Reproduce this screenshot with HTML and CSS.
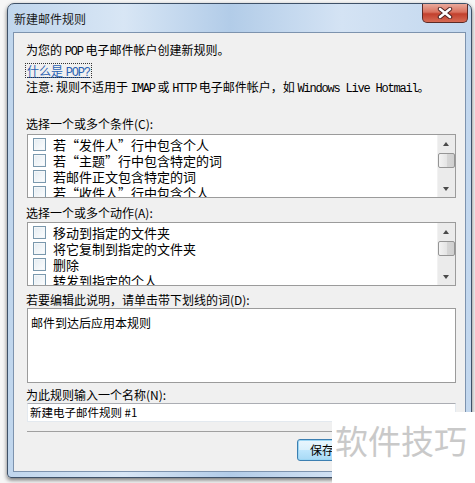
FILE: index.html
```html
<!DOCTYPE html>
<html lang="zh-CN">
<head>
  <meta charset="UTF-8">
  <title>新建邮件规则</title>
  <link rel="stylesheet" href="styles.css">
</head>
<body>

<div class="window">

  <!--标题栏-->
  <div class="titlebar">
    <span class="title">新建邮件规则</span>
    <a class="close" href="javascript:;">
      <svg width="16" height="12" viewBox="0 0 16 12">
        <path d="M3 2 L13 10 M13 2 L3 10" stroke="#4a2020" stroke-width="4.4" stroke-linecap="round"/>
        <path d="M3 2 L13 10 M13 2 L3 10" stroke="#fff" stroke-width="2.6" stroke-linecap="round"/>
      </svg>
    </a>
  </div>

  <!--窗口内容-->
  <div class="client">
    <p class="line first">为您的 <span class="en">POP</span> 电子邮件帐户创建新规则。</p>
    <p class="line link-line"><a class="link" href="javascript:;">什么是 <span class="en">POP?</span></a></p>
    <p class="line note">注意: 规则不适用于 <span class="en">IMAP</span> 或 <span class="en">HTTP</span> 电子邮件帐户，如 <span class="en">Windows Live Hotmail</span>。</p>

    <p class="line label label-cond">选择一个或多个条件(C):</p>
    <div class="listbox">
      <ul class="items">
        <li><span class="check"></span>若“发件人”行中包含个人</li>
        <li><span class="check"></span>若“主题”行中包含特定的词</li>
        <li><span class="check"></span>若邮件正文包含特定的词</li>
        <li><span class="check"></span>若“收件人”行中包含个人</li>
      </ul>
      <div class="scroll">
        <span class="btn up"></span>
        <span class="thumb"></span>
        <span class="track"></span>
        <span class="btn down"></span>
      </div>
    </div>

    <p class="line label label-act">选择一个或多个动作(A):</p>
    <div class="listbox">
      <ul class="items">
        <li><span class="check"></span>移动到指定的文件夹</li>
        <li><span class="check"></span>将它复制到指定的文件夹</li>
        <li><span class="check"></span>删除</li>
        <li><span class="check"></span>转发到指定的个人</li>
      </ul>
      <div class="scroll">
        <span class="btn up"></span>
        <span class="thumb"></span>
        <span class="track"></span>
        <span class="btn down"></span>
      </div>
    </div>

    <p class="line label label-desc">若要编辑此说明，请单击带下划线的词(D):</p>
    <div class="desc">邮件到达后应用本规则</div>

    <p class="line label label-name">为此规则输入一个名称(N):</p>
    <div class="name">新建电子邮件规则 #1</div>

    <div class="sep"></div>

    <div class="buttons">
      <a class="button default" href="javascript:;">保存规则</a>
      <a class="button" href="javascript:;">取消</a>
    </div>
  </div>
</div>

<!--水印-->
<div class="mark">软件技巧</div>

</body>
</html>
```

FILE: styles.css
```css
* {
  margin: 0;
  padding: 0;
  list-style: none;
  box-sizing: border-box;
}

body {
  position: relative;
  width: 475px;
  height: 483px;
  overflow: hidden;
  padding: 3px 0 0 7px;
  background-color: #f6f6f6;
  font-family: "Noto Sans CJK SC", sans-serif;
  font-size: 12px;
  color: #000;
}

/*窗口外框*/
.window {
  width: 465px;
  height: 475px;
  border: 1px solid #3e5168;
  border-radius: 7px 7px 4px 4px;
  background: linear-gradient(to right, #c0d6ed, #d8e6f5 25%, #b2cce8 48%, #d4e3f4 72%, #c2d7ee);
  box-shadow: 0 2px 4px rgba(0, 0, 0, .55);
}

.titlebar {
  height: 28px;
  display: flex;
  align-items: flex-start;
}

.title {
  padding: 7px 0 0 6px;
  line-height: 16px;
  font-size: 12px;
  color: #1b1b1b;
}

.close {
  margin-left: auto;
  margin-right: 3px;
  width: 46px;
  height: 19px;
  border: 1px solid #5b2a26;
  border-top: 0;
  border-radius: 0 0 5px 5px;
  background: linear-gradient(#e9a99b, #d9725f 45%, #c2402d 55%, #d66b55);
  display: flex;
  align-items: center;
  justify-content: center;
}

/*窗口内容区*/
.client {
  height: 440px;
  margin: 0 5px;
  border: 1px solid #7d93ae;
  background-color: #f0f0f0;
  padding: 9px 9px 0 12px;
}

.line {
  height: 16px;
  line-height: 16px;
  white-space: nowrap;
}

/*英文用等宽衬线字*/
.en {
  font-family: "Liberation Mono", monospace;
  font-size: 12px;
  line-height: 1;
  letter-spacing: -1.2px;
}

.link-line {
  margin-top: 5px;
  height: 15px;
  line-height: 15px;
}

/*虚线焦点框*/
.link {
  display: inline-block;
  vertical-align: top;
  margin-top: 1px;
  height: 13px;
  line-height: 13px;
  color: #2a62b3;
  text-decoration: underline;
  outline: 1px dotted #333;
  padding: 0 1px;
}

.note {
  margin-top: 1px;
}

.label-cond {
  margin-top: 21px;
}

.label-act {
  margin-top: 7px;
}

.label-desc {
  margin-top: 6px;
}

.label-name {
  margin-top: 4px;
}

/*列表框*/
.listbox {
  height: 64px;
  margin: 2px 0 0 1px;
  border: 1px solid #9b9b9b;
  background-color: #fff;
  display: flex;
}

.label-act + .listbox {
  margin-top: 1px;
}

.items {
  flex: 1;
  overflow: hidden;
  padding: 1px 0 0 5px;
}

.items li {
  height: 16px;
  display: flex;
  align-items: center;
  gap: 7px;
  font-size: 13px;
  white-space: nowrap;
}

.check {
  width: 13px;
  height: 13px;
  border: 1px solid #7a98ad;
  background: linear-gradient(135deg, #e4ecf2, #fcfdfe);
  box-shadow: inset 0 0 0 1px #f4f7f9;
  flex: none;
}

/*滚动条*/
.scroll {
  width: 18px;
  display: flex;
  flex-direction: column;
  background-color: #ebebeb;
  border-left: 1px solid #f2f2f2;
}

.btn {
  height: 17px;
  position: relative;
}

.btn::after {
  content: "";
  position: absolute;
  left: 5px;
  border-left: 3.5px solid transparent;
  border-right: 3.5px solid transparent;
}

.up::after {
  top: 7px;
  border-bottom: 4px solid #4a4a4a;
}

.down::after {
  top: 7px;
  border-top: 4px solid #4a4a4a;
}

.thumb {
  height: 15px;
  margin: 1px 0 0 0;
  border: 1px solid #959595;
  border-radius: 2px;
  background: linear-gradient(to right, #f3f3f3, #e5e5e5 50%, #d6d6d6 51%, #cfcfcf);
}

.track {
  flex: 1;
}

/*说明框*/
.desc {
  height: 75px;
  margin-left: 1px;
  border: 1px solid #9b9b9b;
  background-color: #fff;
  padding: 6px 3px 0;
  line-height: 16px;
}

.name {
  height: 19px;
  margin-left: 1px;
  border: 1px solid #e3e9ef;
  border-top-color: #abadb3;
  background-color: #fff;
  padding-left: 2px;
  line-height: 17px;
  font-size: 11.5px;
}

.sep {
  height: 1px;
  margin: 9px 0 0 1px;
  background-color: #a0a0a0;
}

.buttons {
  margin: 7px 3px 0 0;
  display: flex;
  justify-content: flex-end;
  gap: 6px;
}

.button {
  width: 75px;
  height: 22px;
  border: 1px solid #707070;
  border-radius: 3px;
  background: linear-gradient(#f2f2f2, #ebebeb 50%, #dddddd 51%, #cfcfcf);
  text-align: center;
  line-height: 20px;
  color: #000;
  text-decoration: none;
}

.button.default {
  border-color: #3c7fb1;
  background: linear-gradient(#eaf6fd, #d9f0fc 50%, #bee6fd 51%, #a7d9f5);
  box-shadow: inset 0 0 0 1px #9cd6f4;
  padding-left: 12px;
  text-align: left;
}

/*水印*/
.mark {
  position: absolute;
  left: 332px;
  top: 412px;
  width: 143px;
  height: 71px;
  background-color: #fff;
  color: #c9c9c9;
  font-size: 33px;
  line-height: 40px;
  padding: 8px 0 0 3px;
  white-space: nowrap;
}
```
